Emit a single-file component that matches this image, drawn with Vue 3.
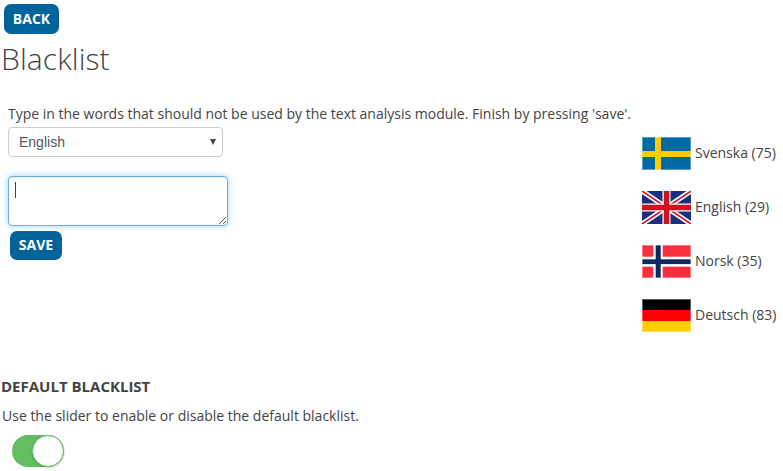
<script setup>
const languages = [
  { id: 'se', label: 'Svenska (75)' },
  { id: 'gb', label: 'English (29)' },
  { id: 'no', label: 'Norsk (35)' },
  { id: 'de', label: 'Deutsch (83)' },
]
</script>

<template>
  <div class="page">
    <button class="btn back" type="button">BACK</button>
    <h1 class="title">Blacklist</h1>
    <div class="columns">
      <div class="editor">
        <p class="intro">Type in the words that should not be used by the text analysis module. Finish by pressing 'save'.</p>
        <div class="select-wrap">
          <select class="select">
            <option>English</option>
          </select>
          <span class="arrow"></span>
        </div>
        <div class="area-wrap">
          <textarea class="area"></textarea>
          <span class="caret"></span>
        </div>
        <button class="btn save" type="button">SAVE</button>
      </div>
      <ul class="langs">
        <li v-for="lang in languages" :key="lang.id" class="lang">
          <svg v-if="lang.id === 'se'" class="flag" viewBox="0 0 49 33">
            <rect width="49" height="33" fill="#006aa7" />
            <rect x="13" width="6" height="33" fill="#fecc00" />
            <rect y="14" width="49" height="6" fill="#fecc00" />
            <rect x="0.5" y="0.5" width="48" height="32" fill="none" stroke="#fff" stroke-opacity="0.35" />
          </svg>
          <svg v-else-if="lang.id === 'gb'" class="flag" viewBox="0 0 49 33">
            <rect width="49" height="33" fill="#1a2f7f" />
            <path d="M0 0L49 33M49 0L0 33" stroke="#fff" stroke-width="5" />
            <path d="M0 0L49 33M49 0L0 33" stroke="#d3121f" stroke-width="1.6" />
            <path d="M24.5 0V33M0 16.5H49" stroke="#fff" stroke-width="8" />
            <path d="M24.5 0V33M0 16.5H49" stroke="#d3121f" stroke-width="5.5" />
          </svg>
          <svg v-else-if="lang.id === 'no'" class="flag" viewBox="0 0 49 33">
            <rect width="49" height="33" fill="#f92f3e" />
            <rect x="11.3" width="9.4" height="33" fill="#fff" />
            <rect y="11.7" width="49" height="10" fill="#fff" />
            <rect x="13.7" width="5" height="33" fill="#0b2a63" />
            <rect y="14.3" width="49" height="4.8" fill="#0b2a63" />
            <rect x="0.5" y="0.5" width="48" height="32" fill="none" stroke="#fff" stroke-opacity="0.35" />
          </svg>
          <svg v-else class="flag" viewBox="0 0 49 33">
            <rect width="49" height="11" fill="#000" />
            <rect y="11" width="49" height="11" fill="#f00" />
            <rect y="22" width="49" height="11" fill="#fc0" />
            <rect x="0.5" y="0.5" width="48" height="32" fill="none" stroke="#fff" stroke-opacity="0.35" />
          </svg>
          <span class="lang-label">{{ lang.label }}</span>
        </li>
      </ul>
    </div>
    <h2 class="subhead">DEFAULT BLACKLIST</h2>
    <p class="hint">Use the slider to enable or disable the default blacklist.</p>
    <div class="toggle"><span class="knob"></span></div>
  </div>
</template>

<style scoped>
.page {
  width: 783px;
  height: 471px;
  overflow: hidden;
  box-sizing: border-box;
  padding: 4px 0 0 2px;
  font-family: "Open Sans", sans-serif;
  font-size: 14px;
  color: #444;
  background: #fff;
}
.btn {
  display: block;
  box-sizing: border-box;
  border: 0;
  border-radius: 7px;
  background: #00649b;
  color: #fff;
  font-family: "Open Sans", sans-serif;
  font-size: 14px;
  font-weight: 700;
  padding: 0 0 2px;
}
.back {
  width: 55px;
  height: 30px;
  margin-left: 2px;
}
.title {
  margin: 4px 0 0 -1px;
  font-size: 30px;
  line-height: 42px;
  font-weight: 300;
  letter-spacing: 0.1px;
  color: #444;
}
.columns {
  display: flex;
  height: 272px;
  margin-top: 24px;
}
.editor {
  width: 640px;
  padding-left: 6px;
  box-sizing: border-box;
}
.intro {
  margin: 0;
  line-height: 20px;
  height: 23px;
}
.select-wrap {
  position: relative;
  width: 215px;
  height: 30px;
}
.select {
  display: block;
  width: 100%;
  height: 100%;
  appearance: none;
  box-sizing: border-box;
  border: 1px solid #ccc;
  border-radius: 4px;
  background: #fff;
  padding: 0 10px;
  font-family: "Liberation Sans", sans-serif;
  font-size: 14px;
  color: #555;
}
.arrow {
  position: absolute;
  right: 7px;
  top: 12px;
  border-left: 3px solid transparent;
  border-right: 3px solid transparent;
  border-top: 6px solid #444;
}
.area-wrap {
  position: relative;
  width: 220px;
  height: 50px;
  margin-top: 19px;
}
.area {
  display: block;
  width: 100%;
  height: 100%;
  box-sizing: border-box;
  border: 1px solid #66afe9;
  border-radius: 4px;
  outline: 0;
  box-shadow: inset 0 1px 1px rgba(0, 0, 0, 0.075), 0 0 6px rgba(102, 175, 233, 0.6);
  margin: 0;
}
.caret {
  position: absolute;
  left: 7px;
  top: 6px;
  width: 1px;
  height: 16px;
  background: #444;
}
.save {
  width: 52px;
  height: 29px;
  margin: 5px 0 0 2px;
}
.langs {
  list-style: none;
  margin: 0;
  padding: 33px 0 0;
  display: flex;
  flex-direction: column;
  gap: 21px;
}
.lang {
  display: flex;
  align-items: center;
  gap: 4px;
  height: 33px;
  white-space: nowrap;
}
.flag {
  display: block;
  width: 49px;
  height: 33px;
  flex: none;
}
.lang-label {
  color: #444;
  padding-bottom: 2px;
}
.subhead {
  margin: 0 0 0 -1px;
  font-size: 15px;
  line-height: 20px;
  font-weight: 700;
  color: #444;
}
.hint {
  margin: 10px 0 0;
  line-height: 20px;
}
.toggle {
  position: relative;
  width: 52px;
  height: 32px;
  margin: 9px 0 0 10px;
  border-radius: 16px;
  background: #64bd63;
}
.knob {
  position: absolute;
  right: 0;
  top: 0;
  width: 32px;
  height: 32px;
  box-sizing: border-box;
  border: 1px solid #64bd63;
  border-radius: 50%;
  background: #fff;
  box-shadow: 0 1px 3px rgba(0, 0, 0, 0.2);
}
</style>
